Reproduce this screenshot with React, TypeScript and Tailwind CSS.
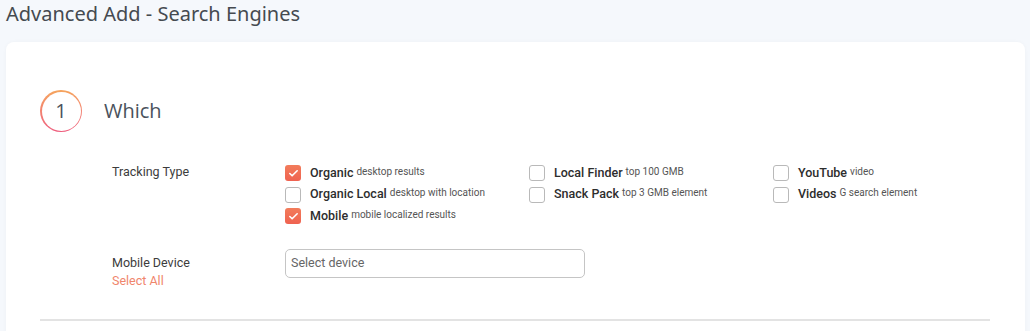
import { Check } from "lucide-react";

type Option = { label: string; note: string; checked: boolean };

const columns: Option[][] = [
  [
    { label: "Organic", note: "desktop results", checked: true },
    { label: "Organic Local", note: "desktop with location", checked: false },
    { label: "Mobile", note: "mobile localized results", checked: true },
  ],
  [
    { label: "Local Finder", note: "top 100 GMB", checked: false },
    { label: "Snack Pack", note: "top 3 GMB element", checked: false },
  ],
  [
    { label: "YouTube", note: "video", checked: false },
    { label: "Videos", note: "G search element", checked: false },
  ],
];

export default function App() {
  return (
    <div className="h-[331px] w-[1030px] overflow-hidden bg-[#f5f8fc] font-['Roboto',sans-serif]">
      <h1 className="px-[6px] pt-[1px] font-['Noto_Sans',sans-serif] text-[20px] leading-[26px] text-[#454a50]">
        Advanced Add - Search Engines
      </h1>
      <div className="mt-[15px] ml-[6px] mr-[5px] rounded-[8px] bg-white px-[34px] pt-[48px] pb-[40px] shadow-[0_0_4px_rgba(0,0,0,0.03)]">
        <div className="flex items-center">
          <div className="rounded-full bg-gradient-to-b from-[#f5a45c] to-[#ee5d7e] p-[1.5px]">
            <div className="flex size-[39px] items-center justify-center rounded-full bg-white font-['Open_Sans',sans-serif] text-[20px] text-[#4a525c]">
              1
            </div>
          </div>
          <h2 className="ml-[22px] font-['Open_Sans',sans-serif] text-[20px] text-[#4a525c]">
            Which
          </h2>
        </div>

        <div className="mt-[33px] flex pl-[72px]">
          <div className="-mt-[2px] w-[173px] shrink-0 text-[12.5px] text-[#3c3c3c]">Tracking Type</div>
          <div className="flex">
            {columns.map((col, i) => (
              <div key={i} className="flex w-[244px] shrink-0 flex-col gap-[5.5px]">
                {col.map((opt) => (
                  <div key={opt.label} className="flex h-[16px] items-center whitespace-nowrap">
                    {opt.checked ? (
                      <span className="flex size-[16px] items-center justify-center rounded-[3px] bg-gradient-to-b from-[#f27c5b] to-[#ef6250]">
                        <Check className="size-[11px] text-white" strokeWidth={3.5} />
                      </span>
                    ) : (
                      <span className="size-[16px] rounded-[3px] border border-[#b9b9b9] bg-white" />
                    )}
                    <span className="ml-[9px] text-[12.5px] font-medium text-[#2d2d2d]">
                      {opt.label}
                    </span>
                    <span className="ml-[3px] -translate-y-[2px] text-[10px] text-[#555]">
                      {opt.note}
                    </span>
                  </div>
                ))}
              </div>
            ))}
          </div>
        </div>

        <div className="mt-[25px] flex pl-[72px]">
          <div className="w-[173px] shrink-0 pt-[6px]">
            <div className="text-[12.5px] leading-[16px] text-[#3c3c3c]">Mobile Device</div>
            <div className="mt-[2px] text-[12.5px] leading-[16px] text-[#f0866c]">Select All</div>
          </div>
          <div className="flex h-[29px] w-[300px] items-center rounded-[5px] border border-[#c5c5c5] px-[5px] text-[12.5px] text-[#666]">
            Select device
          </div>
        </div>

        <div className="mt-[30px] h-[1.5px] w-[950px] bg-[#e3e3e3]" />
      </div>
    </div>
  );
}
